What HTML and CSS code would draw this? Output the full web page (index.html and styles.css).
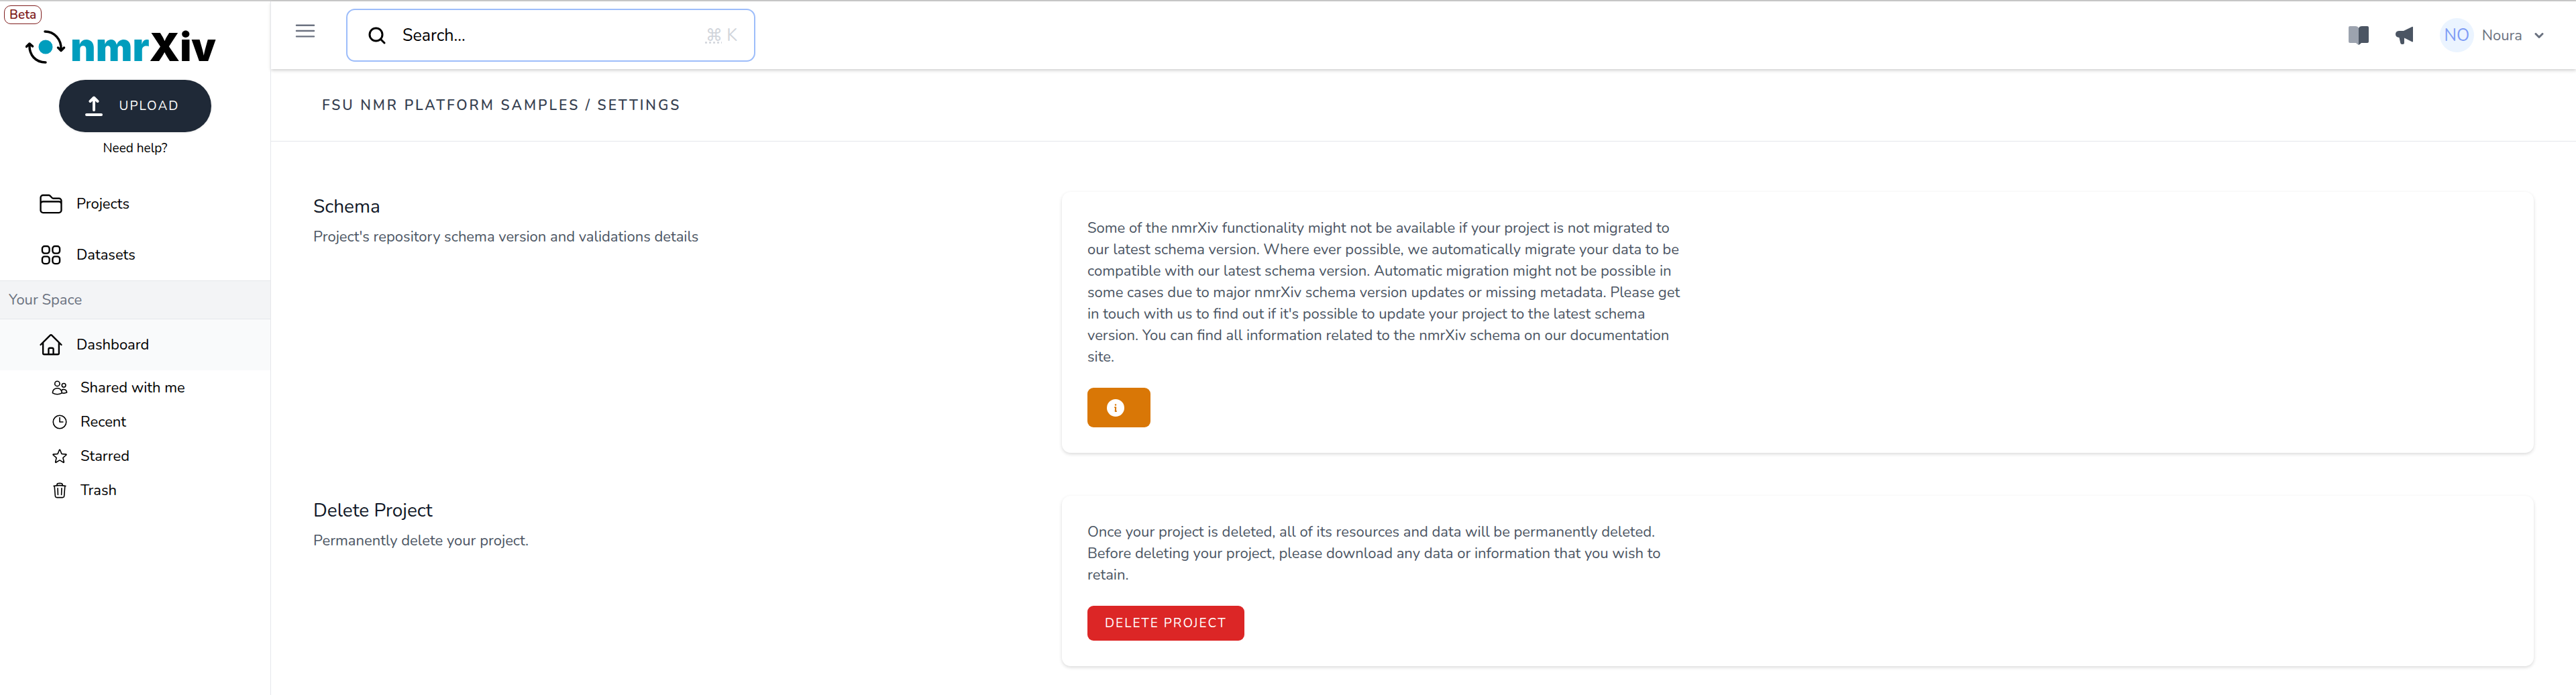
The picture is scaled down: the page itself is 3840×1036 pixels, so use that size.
FILE: index.html
```html
<!DOCTYPE html>
<html lang="en">
<head>
<meta charset="utf-8">
<meta name="viewport" content="width=device-width, initial-scale=1">
<title>nmrXiv – Project settings</title>
<link rel="stylesheet" href="styles.css">
</head>
<body>
<div class="app">
  <aside class="sidebar">
    <span class="beta">Beta</span>
    <a class="brand" href="#" aria-label="nmrXiv home">
      <svg class="brand-mark" viewBox="0 0 60 52" aria-hidden="true">
        <circle cx="30" cy="26" r="10.5" fill="#009dbd"/>
        <g fill="none" stroke="#000" stroke-width="3.5" stroke-linecap="round" stroke-linejoin="round">
          <path d="M29 3c14 0 25 12 24 27M48.500 27l4.500 4.500 4.500-4.500"/>
          <path d="M30 49C15 49 5 38 6 22M1.500 25.500l4.500-4.500 4.500 4"/>
        </g>
      </svg>
      <span class="brand-name"><span class="brand-accent">nmr</span>Xiv</span>
    </a>
    <div class="upload-box">
      <button class="upload" type="button">
        <svg viewBox="0 0 26 30" class="upload-icon" aria-hidden="true">
          <path d="M13 21V3M7.500 8 13 2.500 18.500 8" fill="none" stroke="#fff" stroke-width="4" stroke-linecap="round" stroke-linejoin="round"/>
          <path d="M2 28h22" stroke="#fff" stroke-width="4" stroke-linecap="round"/>
        </svg>
        UPLOAD
      </button>
      <a class="help" href="#">Need help?</a>
    </div>
    <nav class="nav">
      <a class="nav-item" href="#">
        <svg class="icon" viewBox="0 0 24 24" aria-hidden="true"><path d="M2.25 12.75V12A2.25 2.25 0 014.5 9.75h15A2.25 2.25 0 0121.75 12v.75m-8.69-6.44l-2.12-2.12a1.5 1.5 0 00-1.061-.44H4.5A2.25 2.25 0 002.25 6v12a2.25 2.25 0 002.25 2.25h15A2.25 2.25 0 0021.75 18V9a2.25 2.25 0 00-2.25-2.25h-5.379a1.5 1.5 0 01-1.06-.44z"/></svg>
        Projects
      </a>
      <a class="nav-item" href="#">
        <svg class="icon" viewBox="0 0 24 24" aria-hidden="true"><rect x="3.75" y="3.75" width="6.75" height="6.75" rx="2.25"/><rect x="13.5" y="3.75" width="6.75" height="6.75" rx="2.25"/><rect x="3.75" y="13.5" width="6.75" height="6.75" rx="2.25"/><rect x="13.5" y="13.5" width="6.75" height="6.75" rx="2.25"/></svg>
        Datasets
      </a>
      <h2 class="nav-heading">Your Space</h2>
      <a class="nav-item nav-item-active" href="#">
        <svg class="icon" viewBox="0 0 24 24" aria-hidden="true"><path d="M2.25 12l8.954-8.955c.44-.439 1.152-.439 1.591 0L21.75 12M4.5 9.75v10.125c0 .621.504 1.125 1.125 1.125H9.75v-4.875c0-.621.504-1.125 1.125-1.125h2.25c.621 0 1.125.504 1.125 1.125V21h4.125c.621 0 1.125-.504 1.125-1.125V9.75M8.25 21h8.25"/></svg>
        Dashboard
      </a>
      <a class="sub-item" href="#">
        <svg class="icon icon-small" viewBox="0 0 24 24" aria-hidden="true"><path d="M15 19.128a9.38 9.38 0 002.625.372 9.337 9.337 0 004.121-.952 4.125 4.125 0 00-7.533-2.493M15 19.128v-.003c0-1.113-.285-2.16-.786-3.07M15 19.128v.106A12.318 12.318 0 018.624 21c-2.331 0-4.512-.645-6.374-1.766l-.001-.109a6.375 6.375 0 0111.964-3.07M12 6.375a3.375 3.375 0 11-6.75 0 3.375 3.375 0 016.75 0zm8.25 2.25a2.625 2.625 0 11-5.25 0 2.625 2.625 0 015.25 0z"/></svg>
        Shared with me
      </a>
      <a class="sub-item" href="#">
        <svg class="icon icon-small" viewBox="0 0 24 24" aria-hidden="true"><circle cx="12" cy="12" r="9"/><path d="M12 6v6h4.500"/></svg>
        Recent
      </a>
      <a class="sub-item" href="#">
        <svg class="icon icon-small" viewBox="0 0 24 24" aria-hidden="true"><path d="M11.48 3.499a.562.562 0 011.04 0l2.125 5.111a.563.563 0 00.475.345l5.518.442c.499.04.701.663.321.988l-4.204 3.602a.563.563 0 00-.182.557l1.285 5.385a.562.562 0 01-.84.61l-4.725-2.885a.563.563 0 00-.586 0L6.982 20.54a.562.562 0 01-.84-.61l1.285-5.386a.562.562 0 00-.182-.557l-4.204-3.602a.563.563 0 01.321-.988l5.518-.442a.563.563 0 00.475-.345L11.48 3.5z"/></svg>
        Starred
      </a>
      <a class="sub-item" href="#">
        <svg class="icon icon-small" viewBox="0 0 24 24" aria-hidden="true"><path d="M14.74 9l-.346 9m-4.788 0L9.26 9m9.968-3.21c.342.052.682.107 1.022.166m-1.022-.165L18.16 19.673a2.25 2.25 0 01-2.244 2.077H8.084a2.25 2.25 0 01-2.244-2.077L4.772 5.79m14.456 0a48.108 48.108 0 00-3.478-.397m-12 .562c.34-.059.68-.114 1.022-.165m0 0a48.11 48.11 0 013.478-.397m7.5 0v-.916c0-1.18-.91-2.164-2.09-2.201a51.964 51.964 0 00-3.32 0c-1.18.037-2.09 1.022-2.09 2.201v.916m7.5 0a48.667 48.667 0 00-7.5 0"/></svg>
        Trash
      </a>
    </nav>
  </aside>

  <div class="page">
    <header class="topbar">
      <button class="icon-button" type="button" aria-label="Toggle sidebar">
        <svg class="icon" viewBox="0 0 24 24" aria-hidden="true"><path d="M3.75 6.75h16.5M3.75 12h16.5M3.75 17.25h16.5"/></svg>
      </button>
      <button class="search" type="button">
        <svg class="search-icon" viewBox="0 0 26 26" aria-hidden="true"><circle cx="11.500" cy="11.500" r="9.500"/><path d="M18.500 18.500l5.500 5.500"/></svg>
        <span>Search...</span>
        <kbd class="shortcut"><abbr title="Command">⌘</abbr> K</kbd>
      </button>
      <div class="account">
        <a class="tool" href="#" aria-label="Documentation">
          <svg class="tool-icon" viewBox="0 0 30 30" aria-hidden="true"><path d="M2 1h8q4 0 5 3v25q-2-1-4-3H2q-2 0-2-2V3q0-2 2-2z" fill="#9ca3af"/><path d="M28 1h-8q-4 0-5 3v25q2-1 4-3h9q2 0 2-2V3q0-2-2-2z" fill="#4b5563"/></svg>
        </a>
        <a class="tool" href="#" aria-label="Announcements">
          <svg class="tool-icon" viewBox="0 0 30 30" aria-hidden="true"><path d="M26.500 2Q28 1.300 28 3v20.500q0 1.500-1.500.8L15 18.500v7.500q0 2-2 2h-1.500q-1.700 0-2.200-1.800L7.500 18Q2 17.500 2 13t5-5h7z" fill="#4b5563"/></svg>
        </a>
        <button class="user" type="button">
          <span class="avatar">NO</span>
          <span>Noura</span>
          <svg class="chevron" viewBox="0 0 14 8" aria-hidden="true"><path d="M2 1.500l5 5 5-5"/></svg>
        </button>
      </div>
    </header>

    <div class="crumbs">
      <h1 class="crumbs-title">FSU NMR PLATFORM SAMPLES / SETTINGS</h1>
    </div>

    <main class="content">
      <section class="setting">
        <div class="setting-intro">
          <h3 class="setting-title">Schema</h3>
          <p class="setting-text">Project's repository schema version and validations details</p>
        </div>
        <div class="card">
          <p class="card-text">Some of the nmrXiv functionality might not be available if your project is not migrated to our latest schema version. Where ever possible, we automatically migrate your data to be compatible with our latest schema version. Automatic migration might not be possible in some cases due to major nmrXiv schema version updates or missing metadata. Please get in touch with us to find out if it's possible to update your project to the latest schema version. You can find all information related to the nmrXiv schema on our documentation site.</p>
          <button class="button button-warning" type="button" aria-label="Schema information">
            <svg class="info-icon" viewBox="0 0 26 26" aria-hidden="true"><circle cx="13" cy="13" r="13" fill="#fff"/><circle cx="13" cy="8.500" r="1.200" fill="#d97706"/><path d="M12 12.200h1.200l-.500 5.800h1.300" fill="none" stroke="#d97706" stroke-width="2" stroke-linecap="round" stroke-linejoin="round"/></svg>
          </button>
        </div>
      </section>

      <section class="setting">
        <div class="setting-intro">
          <h3 class="setting-title">Delete Project</h3>
          <p class="setting-text">Permanently delete your project.</p>
        </div>
        <div class="card">
          <p class="card-text">Once your project is deleted, all of its resources and data will be permanently deleted. Before deleting your project, please download any data or information that you wish to retain.</p>
          <button class="button button-danger" type="button">DELETE PROJECT</button>
        </div>
      </section>
    </main>
  </div>
</div>
</body>
</html>
```
FILE: styles.css
```css
*,
*::before,
*::after {
  box-sizing: border-box;
}

body {
  margin: 0;
  background: #fff;
  color: #000;
  font-family: Nunito, "Noto Sans", sans-serif;
  font-size: 22px;
  line-height: 32px;
}

h1, h2, h3, p {
  margin: 0;
  font-weight: 400;
}

a {
  color: inherit;
  text-decoration: none;
}

button {
  margin: 0;
  padding: 0;
  border: 0;
  background: none;
  color: inherit;
  font: inherit;
  cursor: pointer;
}

svg {
  display: block;
  flex: none;
}

.app {
  display: flex;
  min-height: 100vh;
  border-top: 2px solid #cbcbcb;
}

/* Sidebar */

.sidebar {
  position: relative;
  flex: none;
  width: 404px;
  padding-top: 38px;
  border-right: 1px solid #e5e7eb;
}

.beta {
  position: absolute;
  top: 6px;
  left: 6px;
  padding: 0 7px;
  border: 1px solid #7f1d1d;
  border-radius: 10px;
  color: #7f1d1d;
  font-size: 19px;
  font-weight: 600;
  line-height: 26px;
}

.brand {
  display: flex;
  align-items: center;
  gap: 7px;
  height: 60px;
  padding-left: 38px;
}

.brand-mark {
  width: 60px;
  height: 52px;
}

.brand-name {
  font-family: Inter, sans-serif;
  font-size: 58px;
  font-weight: 900;
  line-height: 60px;
}

.brand-accent {
  color: #009dbd;
}

.upload-box {
  display: flex;
  flex-direction: column;
  align-items: center;
  gap: 8px;
  padding-top: 19px;
}

.upload {
  display: flex;
  align-items: center;
  gap: 25px;
  height: 78px;
  padding: 0 48px 0 39px;
  border-radius: 39px;
  background: #1f2937;
  color: #fff;
  font-size: 19px;
  letter-spacing: 2px;
  box-shadow: 0 1px 3px rgba(0, 0, 0, 0.1);
}

.upload-icon {
  width: 26px;
  height: 30px;
}

.help {
  font-size: 19px;
}

.nav {
  display: flex;
  flex-direction: column;
  padding-top: 29px;
}

.nav-item {
  display: flex;
  align-items: center;
  gap: 19px;
  height: 76px;
  padding-left: 57px;
}

.nav-item-active {
  background: #f9fafb;
}

.nav-heading {
  padding: 12px 13px;
  border: solid #e5e7eb;
  border-width: 1px 0;
  background: #f3f4f6;
  color: #6b7280;
  font-size: 22px;
}

.sub-item {
  display: flex;
  align-items: center;
  gap: 18px;
  height: 51px;
  padding-left: 76px;
}

.icon {
  width: 38px;
  height: 38px;
  fill: none;
  stroke: currentColor;
  stroke-width: 1.5;
  stroke-linecap: round;
  stroke-linejoin: round;
}

.icon-small {
  width: 26px;
  height: 26px;
}

/* Page */

.page {
  flex: 1;
  min-width: 0;
}

.topbar {
  display: flex;
  align-items: center;
  height: 101px;
  padding: 0 48px 0 32px;
  box-shadow: 0 2px 5px rgba(0, 0, 0, 0.2);
}

.icon-button {
  align-self: flex-start;
  padding-top: 25px;
  color: #6b7280;
}

.search {
  display: flex;
  align-items: center;
  gap: 25px;
  width: 610px;
  height: 79px;
  margin-left: 42px;
  padding: 0 25px 0 31px;
  border: 2px solid #9dbdfa;
  border-radius: 13px;
  font-size: 25px;
}

.search-icon {
  width: 26px;
  height: 26px;
  fill: none;
  stroke: #000;
  stroke-width: 3;
  stroke-linecap: round;
}

.shortcut {
  margin-left: auto;
  color: #d1d5db;
  font-family: inherit;
}

.account {
  display: flex;
  align-items: center;
  gap: 38px;
  margin-left: auto;
  color: #6b7280;
}

.tool-icon {
  width: 30px;
  height: 30px;
}

.user {
  display: flex;
  align-items: center;
  gap: 12px;
}

.avatar {
  display: flex;
  align-items: center;
  justify-content: center;
  width: 51px;
  height: 51px;
  border-radius: 50%;
  background: #ebf4ff;
  color: #7f9cf5;
  font-size: 25px;
}

.chevron {
  width: 14px;
  height: 8px;
  margin-left: 6px;
  fill: none;
  stroke: currentColor;
  stroke-width: 3;
  stroke-linecap: round;
  stroke-linejoin: round;
}

.crumbs {
  padding: 38px 76px 37px;
  border-bottom: 1px solid #e5e7eb;
}

.crumbs-title {
  color: #374151;
  font-size: 21px;
  font-weight: 600;
  letter-spacing: 3px;
}

.content {
  display: flex;
  flex-direction: column;
  gap: 64px;
  padding: 75px 63px 44px;
}

.setting {
  display: grid;
  grid-template-columns: repeat(3, minmax(0, 1fr));
  gap: 38px;
}

.setting-title {
  margin-bottom: 6px;
  color: #111827;
  font-size: 28px;
  line-height: 45px;
}

.setting-text {
  color: #4b5563;
}

.card {
  display: flex;
  flex-direction: column;
  align-items: flex-start;
  gap: 30px;
  grid-column: span 2;
  padding: 38px;
  border-radius: 13px;
  box-shadow: 0 2px 5px rgba(0, 0, 0, 0.15);
}

.card-text {
  max-width: 896px;
  color: #4b5563;
}

.button {
  display: flex;
  align-items: center;
  height: 52px;
  padding: 0 26px;
  border-radius: 9px;
  color: #fff;
  font-size: 19px;
  letter-spacing: 2px;
}

.button-warning {
  height: 59px;
  padding: 0 39px 0 29px;
  background: #d97706;
}

.button-danger {
  background: #dc2626;
}

.info-icon {
  width: 26px;
  height: 26px;
}
```
